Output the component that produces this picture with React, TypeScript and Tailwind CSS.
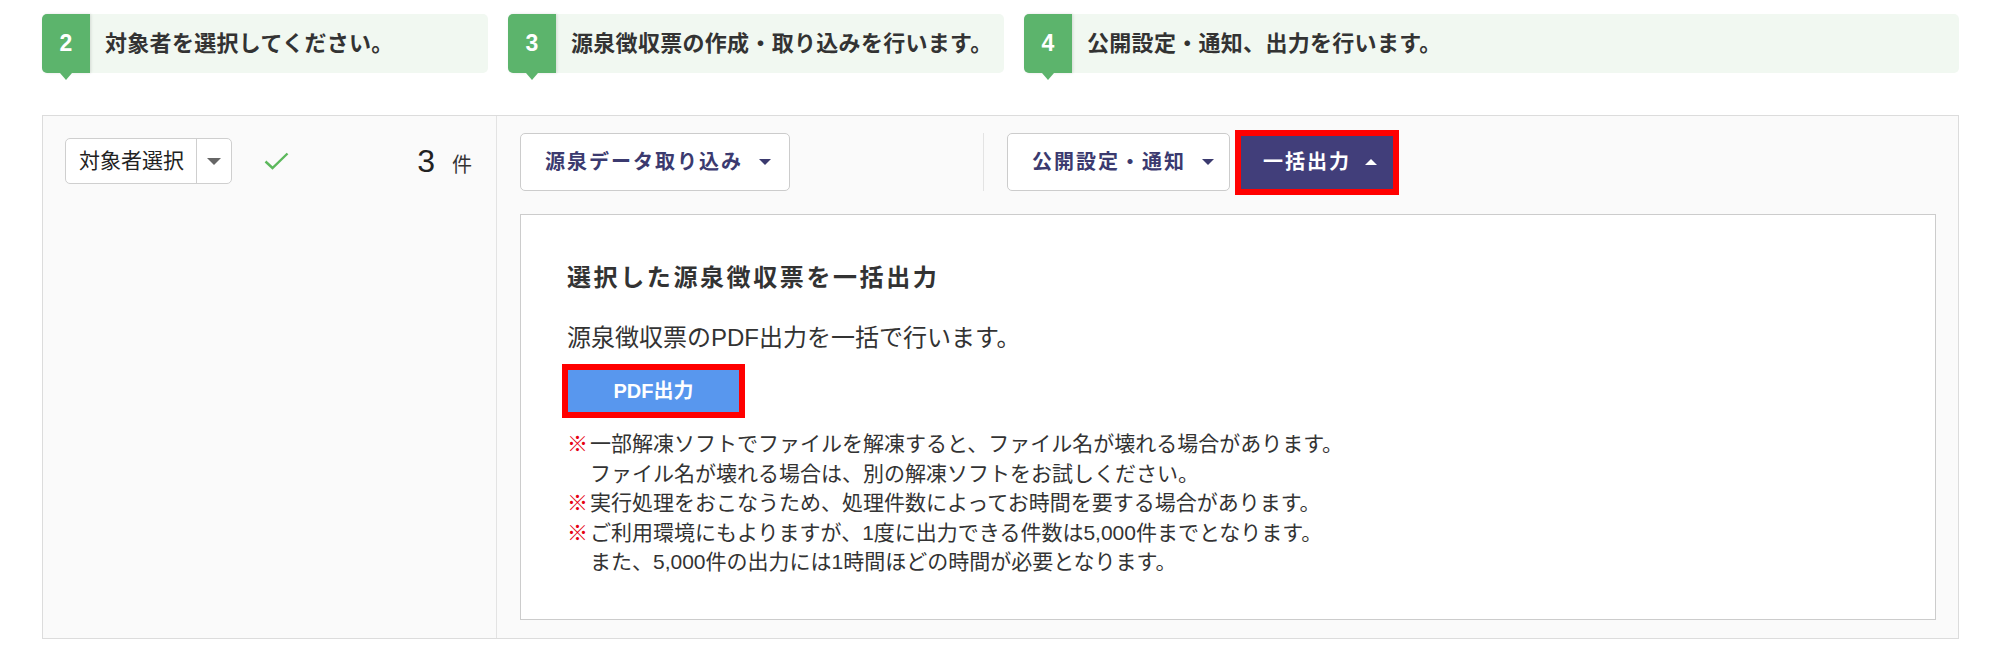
const FONT = "font-['Liberation_Sans','Noto_Sans_CJK_JP',sans-serif]";

function Step({ n, text, width }: { n: string; text: string; width: string }) {
  return (
    <div className={`flex h-[59px] rounded-[5px] bg-[#f1f8f1] ${width}`}>
      <div className="relative flex w-[48px] items-center justify-center rounded-l-[5px] bg-[#5cb46c] shadow-[1px_0_3px_rgba(0,0,0,0.12)]">
        <span className="font-['Liberation_Sans_Narrow','Liberation_Sans',sans-serif] text-[23px] font-bold text-white">
          {n}
        </span>
        <span className="absolute left-1/2 top-full -translate-x-1/2 border-x-[6px] border-t-[7px] border-x-transparent border-t-[#5cb46c]" />
      </div>
      <div className="flex items-center pl-[15px] text-[22px] font-bold tracking-[0.3px] text-[#333]">{text}</div>
    </div>
  );
}

function DownArrow({ up = false, color }: { up?: boolean; color: string }) {
  return up ? (
    <span className={`inline-block border-x-[6px] border-b-[6px] border-x-transparent ${color}`} />
  ) : (
    <span className={`inline-block border-x-[6px] border-t-[6px] border-x-transparent ${color}`} />
  );
}

function Note({ lines }: { lines: string[] }) {
  return (
    <div className="flex">
      <span className="w-[23px] shrink-0 font-bold text-[#e60012]">※</span>
      <div>
        {lines.map((l) => (
          <div key={l}>{l}</div>
        ))}
      </div>
    </div>
  );
}

export default function App() {
  return (
    <div className={`h-[663px] w-[2000px] bg-white ${FONT}`}>
      <div className="pl-[42px] pt-[14px]">
        <div className="flex gap-[20px]">
          <Step n="2" text="対象者を選択してください。" width="w-[446px]" />
          <Step n="3" text="源泉徴収票の作成・取り込みを行います。" width="w-[496px]" />
          <Step n="4" text="公開設定・通知、出力を行います。" width="w-[935px]" />
        </div>

        <div className="mt-[42px] flex h-[524px] w-[1917px] border border-[#dcdcdc] bg-[#fafafa]">
          {/* left column */}
          <div className="flex w-[454px] items-start border-r border-[#e3e3e3] pl-[22px] pr-[24px] pt-[22px]">
            <div className="flex h-[46px] w-[167px] rounded-[5px] border border-[#cfcfcf] bg-white">
              <div className="flex w-[130px] items-center pl-[13px] text-[21px] text-[#222]">対象者選択</div>
              <div className="flex flex-1 items-center justify-center border-l border-[#cfcfcf]">
                <span className="inline-block border-x-[7px] border-t-[7px] border-x-transparent border-t-[#666]" />
              </div>
            </div>
            <svg className="ml-[32px] mt-[14px]" width="25" height="18" viewBox="0 0 25 18" fill="none">
              <path d="M1.5 9.5 L8.5 16 L23.5 1.5" stroke="#5cb85c" strokeWidth="2.4" />
            </svg>
            <div className="ml-auto flex h-[46px] items-center">
              <span className="text-[32px] leading-none text-[#222]">3</span>
              <span className="ml-[17px] mt-[7px] text-[20px] leading-none text-[#333]">件</span>
            </div>
          </div>

          {/* right column */}
          <div className="flex flex-1 flex-col pb-[18px] pl-[23px] pr-[22px] pt-[17px]">
            <div className="flex h-[58px] items-center">
              <button className="flex h-[58px] w-[270px] items-center rounded-[5px] border border-[#cccccc] bg-white pl-[24px] text-[20px] font-bold tracking-[2px] text-[#3b3a6f]">
                源泉データ取り込み
                <span className="ml-[16px] flex">
                  <DownArrow color="border-t-[#3b3a6f]" />
                </span>
              </button>
              <div className="ml-[193px] h-[58px] w-px bg-[#e3e3e3]" />
              <button className="ml-[23px] flex h-[58px] w-[223px] items-center rounded-[5px] border border-[#cccccc] bg-white pl-[24px] text-[20px] font-bold tracking-[2px] text-[#3b3a6f]">
                公開設定・通知
                <span className="ml-[16px] flex">
                  <DownArrow color="border-t-[#3b3a6f]" />
                </span>
              </button>
              <button className="ml-[5px] flex h-[65px] w-[164px] items-center border-[6px] border-[#ff0000] bg-[#413e7a] pl-[22px] text-[20px] font-bold tracking-[2px] text-white">
                一括出力
                <span className="ml-[14px] flex">
                  <DownArrow up color="border-b-white" />
                </span>
              </button>
            </div>

            <div className="mt-[23px] flex-1 border border-[#cccccc] bg-white pl-[46px] pt-[47px] text-[#333]">
              <div className="text-[24px] font-bold leading-[32px] tracking-[2.6px]">選択した源泉徴収票を一括出力</div>
              <div className="mt-[28px] text-[24px] leading-[32px]">源泉徴収票のPDF出力を一括で行います。</div>
              <button className="-ml-[5px] mt-[10px] h-[54px] w-[183px] border-[6px] border-[#ff0000] bg-[#5897ee] text-[20px] font-bold text-white">
                PDF出力
              </button>
              <div className="mt-[11px] text-[21px] leading-[29.5px] text-[#333]">
                <Note
                  lines={[
                    "一部解凍ソフトでファイルを解凍すると、ファイル名が壊れる場合があります。",
                    "ファイル名が壊れる場合は、別の解凍ソフトをお試しください。",
                  ]}
                />
                <Note lines={["実行処理をおこなうため、処理件数によってお時間を要する場合があります。"]} />
                <Note
                  lines={[
                    "ご利用環境にもよりますが、1度に出力できる件数は5,000件までとなります。",
                    "また、5,000件の出力には1時間ほどの時間が必要となります。",
                  ]}
                />
              </div>
            </div>
          </div>
        </div>
      </div>
    </div>
  );
}
